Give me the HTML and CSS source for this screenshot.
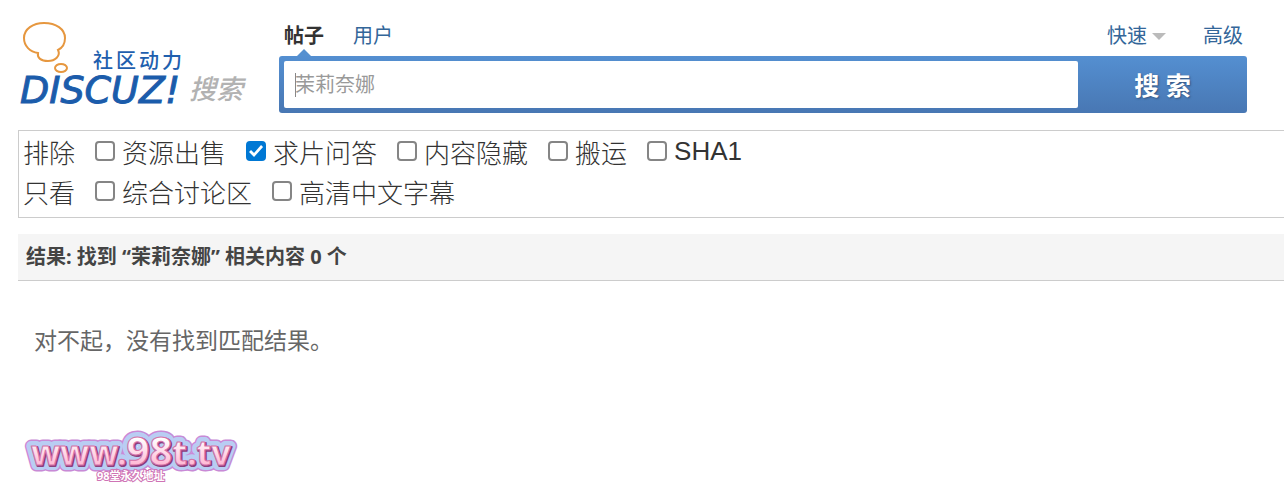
FILE: index.html
```html
<!DOCTYPE html>
<html lang="zh-CN">
<head>
    <meta charset="UTF-8">
    <meta name="viewport" content="width=device-width, initial-scale=1.0">
    <title>搜索</title>

    <link rel="stylesheet" href="styles.css">
</head>
<body>
    <header class="header">
        <a href="#" class="logo">
            <svg width="232" height="92" viewBox="0 0 232 92" role="img" aria-label="Discuz! 搜索">
                <g class="bubble">
                    <path d="M20 33 C12 32 6 26 6 18 C6 9 15 3 26 3 C38 3 47 9 47 18 C47 24 44 28 40 30 C43 36 37 41 30 41 C23 41 19 38 20 33 Z" />
                    <ellipse cx="43" cy="48" rx="6" ry="4" />
                </g>
                <text class="logo-slogan" x="75" y="48">社区动力</text>
                <text class="logo-name" x="2" y="83">DISCUZ!</text>
                <text class="logo-search" x="171" y="79">搜索</text>
            </svg>
        </a>

        <form class="search" action="#">
            <div class="search-nav">
                <a href="#" class="active">帖子</a>
                <a href="#">用户</a>
                <a href="#" class="quick">快速</a>
                <a href="#">高级</a>
            </div>
            <div class="search-bar">
                <input type="text" class="search-input" placeholder="茉莉奈娜" aria-label="搜索内容">
                <button type="submit" class="search-btn">搜 索</button>
            </div>
        </form>
    </header>

    <div class="filter">
        <div class="filter-row">
            <span class="filter-title">排除</span>
            <label><input type="checkbox">资源出售</label>
            <label><input type="checkbox" checked>求片问答</label>
            <label><input type="checkbox">内容隐藏</label>
            <label><input type="checkbox">搬运</label>
            <label><input type="checkbox">SHA1</label>
        </div>
        <div class="filter-row">
            <span class="filter-title">只看</span>
            <label><input type="checkbox">综合讨论区</label>
            <label><input type="checkbox">高清中文字幕</label>
        </div>
    </div>

    <h2 class="result">结果: 找到 “<em>茉莉奈娜</em>” 相关内容 0 个</h2>
    <p class="empty">对不起，没有找到匹配结果。</p>

    <svg class="site" width="220" height="60" viewBox="0 0 220 60" role="img" aria-label="www.98t.tv">
        <defs>
            <linearGradient id="pink" x1="0" y1="0" x2="0" y2="1">
                <stop offset="0.3" stop-color="#ffffff" />
                <stop offset="0.8" stop-color="#ffb5d3" />
            </linearGradient>
            <text id="site-name" class="site-name" x="9" y="41">www.<tspan class="big">98</tspan>t.tv</text>
        </defs>
        <use href="#site-name" class="edge" />
        <use href="#site-name" class="halo" />
        <use href="#site-name" class="shade" x="1" y="1" />
        <use href="#site-name" class="face" />
        <text class="site-note" x="75" y="56">98堂永久地址</text>
    </svg>
</body>
</html>
```
FILE: styles.css
```css
body {
    margin: 0;
    padding: 20px 0 0 18px;
    background: #fff;
    color: #333;
    font-family: "Noto Sans", "Noto Sans CJK SC", sans-serif;
}
a {
    color: #369;
    text-decoration: none;
}

/* header */
.header {
    display: flex;
    align-items: flex-start;
    padding-right: 37px;
    margin-bottom: 17px;
}
.logo {
    width: 261px;
    flex-shrink: 0;
}
.logo svg {
    display: block;
}
.bubble {
    fill: none;
    stroke: #e6973f;
    stroke-width: 2;
}
.logo-slogan {
    fill: #1f5fae;
    font-size: 20px;
    font-weight: 500;
    letter-spacing: 3px;
}
.logo-name {
    fill: #1b5cab;
    stroke: #1b5cab;
    stroke-width: 1;
    font: italic 38px "DejaVu Sans", sans-serif;
}
.logo-search {
    fill: #b2b2b2;
    font-size: 27px;
    font-style: italic;
    font-weight: 500;
}

/* search */
.search {
    flex: 1;
}
.search-nav {
    display: flex;
    box-sizing: border-box;
    height: 36px;
    padding: 1px 4px 0 5px;
    font-size: 20px;
    line-height: 30px;
}
.search-nav a {
    position: relative;
    height: 30px;
    margin-right: 29px;
}
.search-nav a:last-child {
    margin-right: 0;
}
.search-nav .active {
    height: 35px;
    color: #333;
    font-weight: bold;
}
.search-nav .active:after {
    content: '';
    position: absolute;
    left: 13px;
    bottom: 0;
    border: 7px solid transparent;
    border-top: 0;
    border-bottom-color: #5590d0;
}
.search-nav .quick {
    display: flex;
    align-items: center;
    margin-left: auto;
    margin-right: 37px;
}
.search-nav .quick:after {
    content: '';
    margin-left: 5px;
    border: 7px solid transparent;
    border-top-color: #bbb;
    border-bottom: 0;
}
.search-bar {
    display: flex;
    box-sizing: border-box;
    height: 57px;
    padding: 5px;
    padding-right: 0;
    border-radius: 3px;
    background: linear-gradient(#548fd1, #4877b3);
}
.search-input {
    flex: 1;
    min-width: 0;
    box-sizing: border-box;
    padding: 0 11px;
    border: 0;
    border-radius: 2px;
    background: #fff linear-gradient(#888, #888) 11px center / 1px 24px no-repeat;
    color: #333;
    font: inherit;
    font-size: 20px;
    outline: 0;
}
.search-input::placeholder {
    color: #999;
}
.search-btn {
    width: 169px;
    padding: 0;
    border: 0;
    background: none;
    color: #fff;
    font: inherit;
    font-size: 25px;
    font-weight: bold;
    line-height: 46px;
    text-shadow: 1px 1px 2px #33537f;
}

/* filter */
.filter {
    padding: 0 4px 6px;
    border: 1px solid #ccc;
    border-right: 0;
    font: 300 26px "Liberation Sans", "Noto Sans CJK SC", sans-serif;
}
.filter-row {
    display: flex;
    align-items: center;
    gap: 20px;
    height: 40px;
}
.filter label {
    display: flex;
    align-items: center;
}
.filter input {
    appearance: none;
    box-sizing: border-box;
    width: 20px;
    height: 20px;
    margin: 0 7px 0 0;
    border: 2px solid #858585;
    border-radius: 4px;
    background: #fff;
}
.filter input:checked {
    display: flex;
    border-color: #0078d4;
    background: #0078d4;
}
.filter input:checked:after {
    content: '';
    width: 16px;
    height: 16px;
    background: #fff;
    clip-path: polygon(1px 9px, 3px 7px, 6px 10px, 13px 2px, 15px 4px, 6px 14px);
}

/* result */
.result {
    margin: 16px 0 0;
    padding: 0 8px;
    border-bottom: 1px solid #ccc;
    background: #f5f5f5;
    color: #444;
    font-size: 20px;
    line-height: 46px;
}
.result em {
    font-style: normal;
}
.empty {
    margin: 39px 16px 0;
    color: #666;
    font-size: 23px;
    line-height: 40px;
}

/* site */
.site {
    display: block;
    margin: 64px 0 0 4px;
}
.site-name {
    font: bold 34px "Noto Sans", sans-serif;
    stroke-linejoin: round;
}
.site-name .big {
    font-size: 40px;
}
.edge {
    fill: #c98ad6;
    stroke: #c98ad6;
    stroke-width: 13;
}
.halo {
    fill: #b9cdf3;
    stroke: #b9cdf3;
    stroke-width: 10;
}
.shade {
    fill: #8b3f7e;
    stroke: #8b3f7e;
    stroke-width: 2;
}
.face {
    fill: url(#pink);
    stroke: #d872a8;
    stroke-width: 1;
}
.site-note {
    fill: #fff;
    stroke: #cf74b5;
    stroke-width: 2;
    paint-order: stroke;
    font-size: 11px;
    font-weight: bold;
}
```
